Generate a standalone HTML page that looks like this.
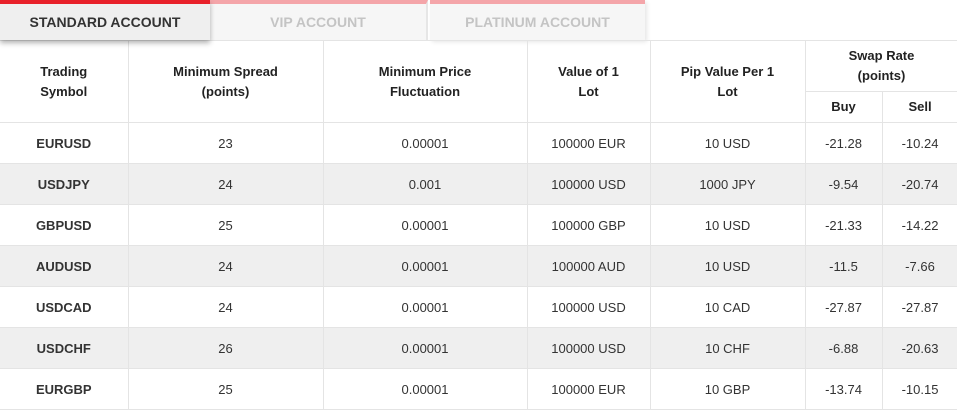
<!DOCTYPE html>
<html><head><style>
body{margin:0;width:957px;height:410px;background:#fff;font-family:"Liberation Sans",Arial,sans-serif;overflow:hidden;position:relative}
.tab{position:absolute;top:0;height:40px;border-top:4px solid #f4a5a9;box-sizing:border-box;background:#f6f6f6;color:#c4c4c4;font-weight:bold;font-size:14px;text-align:center;line-height:36px}
.t1{left:0;width:210px;border-top-color:#e8202a;color:#333;background:#efefef;box-shadow:0 3px 5px rgba(0,0,0,.3);z-index:2}
.t2{left:210px;width:218px;border-right:2px solid #e6e6e6}
.t3{left:430px;width:215px;box-shadow:2px 2px 4px rgba(0,0,0,.1)}
table{position:absolute;top:40px;left:0;border-collapse:collapse;table-layout:fixed;width:958px;font-size:13px;color:#333}
td,th{border:1px solid #e4e4e4;text-align:center;padding:0}
th{font-weight:bold;color:#222;line-height:20px}
tr.b td{height:40px}
tr.b:nth-child(even) td{background:#efefef}
td.s{font-weight:bold}
td:first-child,th:first-child{border-left:none}
</style></head><body>
<div class="tab t1">STANDARD ACCOUNT</div>
<div class="tab t2">VIP ACCOUNT</div>
<div class="tab t3">PLATINUM ACCOUNT</div>
<table>
<colgroup><col style="width:128px"><col style="width:195px"><col style="width:204px"><col style="width:123px"><col style="width:155px"><col style="width:77px"><col style="width:76px"></colgroup>
<tr style="height:51px"><th rowspan="2">Trading<br>Symbol</th><th rowspan="2">Minimum Spread<br>(points)</th><th rowspan="2">Minimum Price<br>Fluctuation</th><th rowspan="2">Value of 1<br>Lot</th><th rowspan="2">Pip Value Per 1<br>Lot</th><th colspan="2">Swap Rate<br>(points)</th></tr>
<tr style="height:31px"><th>Buy</th><th>Sell</th></tr>
<tr class="b"><td class="s">EURUSD</td><td>23</td><td>0.00001</td><td>100000 EUR</td><td>10 USD</td><td>-21.28</td><td>-10.24</td></tr>
<tr class="b"><td class="s">USDJPY</td><td>24</td><td>0.001</td><td>100000 USD</td><td>1000 JPY</td><td>-9.54</td><td>-20.74</td></tr>
<tr class="b"><td class="s">GBPUSD</td><td>25</td><td>0.00001</td><td>100000 GBP</td><td>10 USD</td><td>-21.33</td><td>-14.22</td></tr>
<tr class="b"><td class="s">AUDUSD</td><td>24</td><td>0.00001</td><td>100000 AUD</td><td>10 USD</td><td>-11.5</td><td>-7.66</td></tr>
<tr class="b"><td class="s">USDCAD</td><td>24</td><td>0.00001</td><td>100000 USD</td><td>10 CAD</td><td>-27.87</td><td>-27.87</td></tr>
<tr class="b"><td class="s">USDCHF</td><td>26</td><td>0.00001</td><td>100000 USD</td><td>10 CHF</td><td>-6.88</td><td>-20.63</td></tr>
<tr class="b"><td class="s">EURGBP</td><td>25</td><td>0.00001</td><td>100000 EUR</td><td>10 GBP</td><td>-13.74</td><td>-10.15</td></tr>
</table>
</body></html>
